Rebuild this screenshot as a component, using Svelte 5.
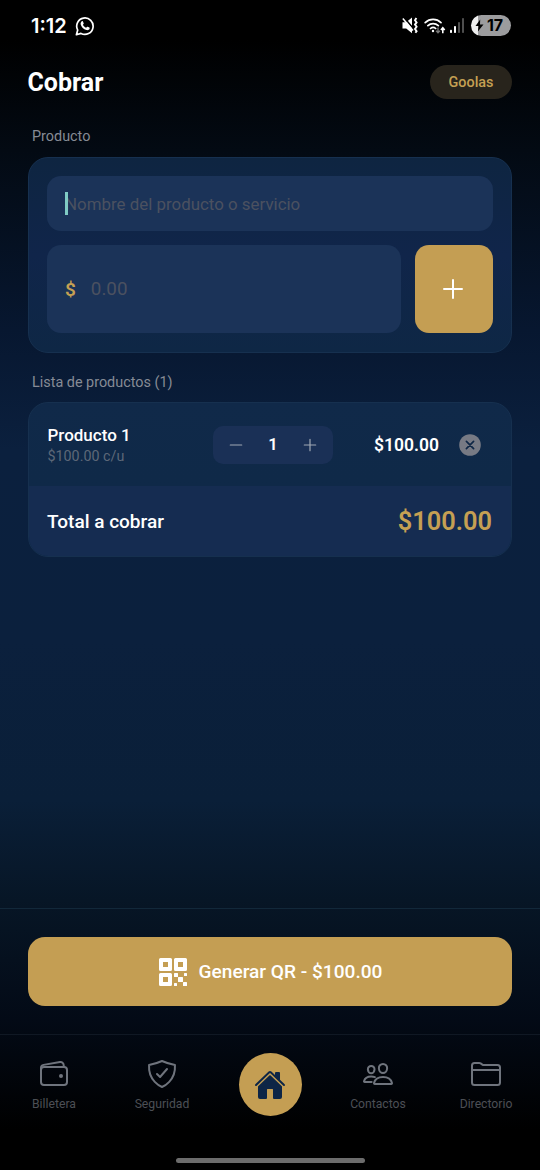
<script>
	/** @type {{ id: number, name: string, price: number, quantity: number }[]} Products to charge for. */
	let products = $state([{ id: 1, name: "Producto 1", price: 100, quantity: 1 }]);

	/** @type {number} Sum of every product line. */
	const total = $derived(products.reduce((sum, item) => sum + item.price * item.quantity, 0));

	const money = (value) => `$${value.toFixed(2)}`;

	const changeQuantity = (item, amount) => {
		item.quantity = Math.max(1, item.quantity + amount);
	};

	const removeProduct = (id) => {
		products = products.filter((item) => item.id !== id);
	};
</script>

<div class="screen">
	<div class="status">
		<div class="status-left">
			<span class="clock">1:12</span>
			<svg width="20" height="20" viewBox="0 0 20 20" fill="none">
				<path d="M1.4 18.7l1.3-4.6A8.2 8.2 0 1 1 6 17.4z" stroke="#fff" stroke-width="1.7" stroke-linejoin="round"/>
				<path d="M6.7 5.3c.4-.4 1-.4 1.2.1l.8 1.8c.1.3 0 .5-.2.8l-.6.8c.7 1.4 1.8 2.4 3.2 3l.8-.9c.2-.3.5-.3.8-.2l1.7.9c.4.2.4.6.2 1.1-.5 1.3-1.9 1.7-3.2 1.3-2.9-.9-5-3-5.7-5.6-.3-1.2.2-2.3 1-3.1z" fill="#fff"/>
			</svg>
		</div>
		<div class="status-right">
			<svg class="mute" width="17" height="17" viewBox="0 0 17 17">
				<path d="M.5 5.2h3.700L10 .6v15.600L4.200 11.600H.5z" fill="#fff"/>
				<path d="M2.200 .6L11 11.200" stroke="#000" stroke-width="1.600"/>
				<path d="M.8 1.400L11 13.600" stroke="#fff" stroke-width="1.500"/>
				<path d="M14.400 1l-1.400 2.200 1.600 2.200-1.600 2.200 1.600 2.200-1.600 2.200 1.600 2.200-1.200 1.600" fill="none" stroke="#fff" stroke-width="1.900"/>
			</svg>
			<svg class="wifi" width="22" height="18" viewBox="0 0 22 18" fill="none">
				<path d="M1.200 5.600a11.500 11.500 0 0 1 15.800 0M3.900 8.700a7.600 7.600 0 0 1 10.400 0M6.500 11.500a3.800 3.800 0 0 1 5.200 0" stroke="#fff" stroke-width="1.700" stroke-linecap="round"/>
				<circle cx="9" cy="14" r="1.200" fill="#fff"/>
				<path d="M14 10.500v5M12.100 13.700l1.900 2 1.900-2" stroke="#777" stroke-width="1.400"/>
				<path d="M18.800 16.200v-5M16.900 12.900l1.900-2.200 1.900 2.200" stroke="#fff" stroke-width="1.600"/>
			</svg>
			<svg class="signal" width="15" height="16" viewBox="0 0 15 16">
				<rect x="0" y="11.800" width="2" height="3.200" rx=".8" fill="#fff"/>
				<rect x="4" y="8" width="2" height="7" rx=".8" fill="#fff"/>
				<rect x="8" y="4" width="2" height="11" rx=".8" fill="#4e4e4e"/>
				<rect x="12" y="0" width="2" height="15" rx=".8" fill="#4e4e4e"/>
			</svg>
			<div class="battery">
				<svg width="9" height="13" viewBox="0 0 9 13"><path d="M5.200.5L.5 7h3l-.6 5.500L8.500 5.500H5z" fill="#000"/></svg>
				<span>17</span>
			</div>
		</div>
	</div>

	<header class="header">
		<h1>Cobrar</h1>
		<span class="pill">Goolas</span>
	</header>

	<main class="content">
		<h2>Producto</h2>
		<section class="card form">
			<div class="field name">
				<span class="cursor"></span>
				<span class="placeholder">Nombre del producto o servicio</span>
			</div>
			<div class="form-row">
				<div class="field price">
					<span class="currency">$</span>
					<span class="placeholder">0.00</span>
				</div>
				<button class="add" aria-label="Agregar producto">
					<svg width="20" height="20" viewBox="0 0 20 20"><path d="M10 1v18M1 10h18" stroke="#fff" stroke-width="2" stroke-linecap="round"/></svg>
				</button>
			</div>
		</section>

		<h2 class="list-title">Lista de productos ({products.length})</h2>
		<section class="card list">
			{#each products as item (item.id)}
				<div class="product">
					<div class="details">
						<strong>{item.name}</strong>
						<span>{money(item.price)} c/u</span>
					</div>
					<div class="stepper">
						<button aria-label="Menos" onclick={() => changeQuantity(item, -1)}>
							<svg width="14" height="14" viewBox="0 0 14 14"><path d="M1.300 7h11.400" stroke="#a0a8b4" stroke-width="1.200" stroke-linecap="round"/></svg>
						</button>
						<span>{item.quantity}</span>
						<button aria-label="Más" onclick={() => changeQuantity(item, 1)}>
							<svg width="14" height="14" viewBox="0 0 14 14"><path d="M1.300 7h11.400M7 1.300v11.400" stroke="#a0a8b4" stroke-width="1.200" stroke-linecap="round"/></svg>
						</button>
					</div>
					<span class="subtotal">{money(item.price * item.quantity)}</span>
					<button class="remove" aria-label="Quitar" onclick={() => removeProduct(item.id)}>
						<svg width="22" height="22" viewBox="0 0 22 22">
							<circle cx="11" cy="11" r="10.800" fill="#777a84"/>
							<path d="M7.400 7.400l7.200 7.200M14.600 7.400l-7.200 7.200" stroke="#0f2746" stroke-width="1.700" stroke-linecap="round"/>
						</svg>
					</button>
				</div>
			{/each}
			<div class="total">
				<span>Total a cobrar</span>
				<strong>{money(total)}</strong>
			</div>
		</section>
	</main>

	<div class="action">
		<button class="generate">
			<svg width="32" height="32" viewBox="0 0 512 512" fill="#fff">
				<path fill-rule="evenodd" d="M56 32h160a24 24 0 0 1 24 24v160a24 24 0 0 1-24 24H56a24 24 0 0 1-24-24V56a24 24 0 0 1 24-24zM96 96v80h80V96zM296 32h160a24 24 0 0 1 24 24v160a24 24 0 0 1-24 24H296a24 24 0 0 1-24-24V56a24 24 0 0 1 24-24zM336 96v80h80V96zM56 272h160a24 24 0 0 1 24 24v160a24 24 0 0 1-24 24H56a24 24 0 0 1-24-24V296a24 24 0 0 1 24-24zM96 336v80h80v-80z"/>
				<rect x="336" y="336" width="80" height="80" rx="8"/>
				<rect x="272" y="272" width="64" height="64" rx="8"/>
				<rect x="416" y="416" width="64" height="64" rx="8"/>
				<rect x="432" y="272" width="48" height="48" rx="8"/>
				<rect x="272" y="432" width="48" height="48" rx="8"/>
			</svg>
			<span>Generar QR - {money(total)}</span>
		</button>
	</div>

	<nav class="tabs">
		<a href="#billetera">
			<svg viewBox="0 0 512 512">
				<rect x="48" y="144" width="416" height="288" rx="48"/>
				<path d="M411.360 144v-30A50 50 0 0 0 352 64.900L88.640 109.850A50 50 0 0 0 48 159v49"/>
				<circle cx="368" cy="288" r="32" fill="currentColor" stroke="none"/>
			</svg>
			<span>Billetera</span>
		</a>
		<a href="#seguridad">
			<svg viewBox="0 0 512 512">
				<path d="M336 176L225.200 304 176 255.800"/>
				<path d="M463.100 112.370C373.680 96.330 336.710 84.450 256 48c-80.710 36.450-117.680 48.330-207.100 64.370C32.700 369.130 240.580 457.790 256 464c15.420-6.210 223.300-94.870 207.100-351.630z"/>
			</svg>
			<span>Seguridad</span>
		</a>
		<a href="#inicio" class="home" aria-label="Inicio">
			<span class="home-circle">
				<svg viewBox="0 0 512 512">
					<path d="M261.560 101.280a8 8 0 0 0-11.060 0L66.400 277.150a8 8 0 0 0-2.470 5.790L63.900 448a32 32 0 0 0 32 32H192a16 16 0 0 0 16-16V328a8 8 0 0 1 8-8h80a8 8 0 0 1 8 8v136a16 16 0 0 0 16 16h96.060a32 32 0 0 0 32-32V282.940a8 8 0 0 0-2.470-5.790z"/>
					<path d="M490.910 244.150l-74.800-71.560V64a16 16 0 0 0-16-16h-48a16 16 0 0 0-16 16v32l-57.920-55.380C272.770 35.140 264.710 32 256 32c-8.680 0-16.720 3.140-22.140 8.630l-212.700 203.500c-6.220 6-7 15.870-1.340 22.370A16 16 0 0 0 43 267.560L250.500 69.280a8 8 0 0 1 11.060 0l207.520 198.280a16 16 0 0 0 22.590-.44c6.140-6.360 5.630-16.860-.76-22.970z"/>
				</svg>
			</span>
		</a>
		<a href="#contactos">
			<svg viewBox="0 0 512 512">
				<path d="M402 168c-2.930 40.670-33.100 72-66 72s-63.120-31.320-66-72c-3-42.310 26.370-72 66-72s69 30.460 66 72z"/>
				<path d="M336 304c-65.170 0-127.840 32.370-143.540 95.410-2.080 8.340 3.150 16.590 11.720 16.590h263.650c8.570 0 13.770-8.250 11.720-16.590C463.850 335.360 401.180 304 336 304z"/>
				<path d="M200 185.940c-2.340 32.480-26.720 58.060-53 58.060s-50.700-25.570-53-58.060C91.610 152.150 115.340 128 147 128s55.390 24.770 53 57.940z"/>
				<path d="M206 306c-18.050-8.270-37.930-11.450-59-11.450-52 0-102.100 25.850-114.650 76.200-1.650 6.660 2.530 13.250 9.370 13.250H154"/>
			</svg>
			<span>Contactos</span>
		</a>
		<a href="#directorio">
			<svg viewBox="0 0 512 512">
				<path d="M440 432H72a40 40 0 0 1-40-40V120a40 40 0 0 1 40-40h75.890a40 40 0 0 1 22.190 6.720l27.840 18.560a40 40 0 0 0 22.190 6.720H440a40 40 0 0 1 40 40v240a40 40 0 0 1-40 40zM32 192h448"/>
			</svg>
			<span>Directorio</span>
		</a>
	</nav>
	<div class="gesture"><span></span></div>
</div>

<style>
	:global(body) {
		margin: 0;
		background: #000;
	}

	.screen {
		display: flex;
		flex-direction: column;
		box-sizing: border-box;
		width: 540px;
		height: 1170px;
		overflow: hidden;
		font-family: Roboto, "Liberation Sans", sans-serif;
		color: #fff;
		background: linear-gradient(180deg, #000 0, #000 40px, #030a13 150px, #071730 330px, #0b203e 450px, #0b203d 640px, #0a1f38 800px, #071626 900px, #030a16 1020px, #000 1130px);
	}

	button {
		display: flex;
		align-items: center;
		justify-content: center;
		padding: 0;
		border: 0;
		font: inherit;
		color: inherit;
		background: none;
	}

	.status {
		display: flex;
		justify-content: space-between;
		align-items: center;
		height: 51px;
		padding: 0 29px 0 31px;
	}

	.status-left,
	.status-right {
		display: flex;
		align-items: center;
	}

	.status-left {
		gap: 8px;
	}

	.clock {
		font-family: Inter, Roboto, sans-serif;
		font-size: 20px;
		font-weight: 600;
		letter-spacing: 0;
	}

	.mute {
		margin-right: 5px;
	}

	.wifi {
		margin-right: 4px;
	}

	.signal {
		margin-right: 6px;
	}

	.battery {
		display: flex;
		align-items: center;
		gap: 3px;
		box-sizing: border-box;
		width: 40px;
		height: 21px;
		padding-left: 4px;
		border-radius: 11px;
		font-family: Inter, Roboto, sans-serif;
		font-size: 16px;
		font-weight: 700;
		letter-spacing: -0.2px;
		line-height: 20px;
		color: #000;
		background: linear-gradient(90deg, #eee 7px, #9c9c9e 7px);
	}

	.battery span {
		padding-bottom: 1px;
	}

	.header {
		display: flex;
		align-items: center;
		justify-content: space-between;
		height: 61px;
		padding: 0 28px 0 27.5px;
	}

	h1 {
		margin: 0;
		padding-top: 1px;
		font-size: 25px;
		font-weight: 700;
	}

	.pill {
		box-sizing: border-box;
		width: 82px;
		height: 34px;
		border-radius: 17px;
		line-height: 35px;
		text-align: center;
		font-size: 14.4px;
		font-weight: 500;
		color: #c5a053;
		background: #28241c;
	}

	.content {
		flex: 1;
		padding: 15px 28px 0;
	}

	h2 {
		margin: 0 4px 10px;
		font-size: 14.4px;
		font-weight: 400;
		line-height: 20px;
		color: #868b95;
	}

	.list-title {
		margin-top: 20px;
		margin-bottom: 9px;
	}

	.card {
		box-sizing: border-box;
		border: 1px solid #16304f;
		border-radius: 20px;
		overflow: hidden;
	}

	.form {
		display: flex;
		flex-direction: column;
		gap: 14px;
		height: 196px;
		padding: 18px;
		background: linear-gradient(180deg, #0e2541, #10254a 50%, #0e2745);
	}

	.form-row {
		display: flex;
		gap: 14px;
		height: 88px;
	}

	.field {
		display: flex;
		align-items: center;
		box-sizing: border-box;
		padding: 0 18px;
		border-radius: 14px;
		background: #1b3358;
	}

	.name {
		position: relative;
		height: 55px;
		font-size: 16.9px;
	}

	.placeholder {
		color: #4b5160;
	}

	.cursor {
		position: absolute;
		top: 16px;
		left: 18px;
		width: 3px;
		height: 23px;
		background: #80cbc4;
	}

	.price {
		flex: 1;
		gap: 15px;
		font-size: 18.8px;
	}

	.currency {
		font-size: 19px;
		font-weight: 600;
		color: #c5a053;
	}

	.add {
		width: 78px;
		border-radius: 14px;
		background: #c49e53;
	}

	.add svg {
		margin-right: 2px;
	}

	.list {
		background: linear-gradient(180deg, #102949, #0e2947);
	}

	.product {
		display: flex;
		align-items: center;
		height: 83px;
		padding: 0 30px 0 18.5px;
	}

	.details {
		display: flex;
		flex-direction: column;
		gap: 2px;
		width: 166px;
		padding-top: 2px;
		line-height: 19px;
	}

	.details strong {
		font-size: 17px;
		font-weight: 500;
	}

	.details span {
		font-size: 14.3px;
		color: #5d6878;
	}

	.stepper {
		display: flex;
		align-items: center;
		justify-content: space-between;
		box-sizing: border-box;
		width: 120px;
		height: 38px;
		margin-left: -0.5px;
		padding: 0 16px;
		border-radius: 10px;
		background: #1a3056;
	}

	.stepper span {
		font-size: 16.5px;
		font-weight: 600;
	}

	.subtotal {
		flex: 1;
		text-align: right;
		font-size: 17.5px;
		font-weight: 600;
	}

	.remove {
		margin-left: 20px;
	}

	.total {
		display: flex;
		align-items: center;
		justify-content: space-between;
		height: 70px;
		padding: 0 19px 0 18px;
		font-size: 19px;
		font-weight: 500;
		background: #152c51;
	}

	.total strong {
		font-size: 25.4px;
		font-weight: 600;
		color: #c5a053;
	}

	.action {
		box-sizing: border-box;
		height: 126px;
		padding: 28px 28px 0;
		border-top: 1px solid #12283a;
	}

	.generate {
		gap: 10px;
		width: 100%;
		height: 69px;
		padding-right: 1px;
		border-radius: 17px;
		font-size: 19.1px;
		font-weight: 500;
		background: #c49e53;
	}

	.tabs {
		display: flex;
		box-sizing: border-box;
		height: 124px;
		border-top: 1px solid #101824;
	}

	.tabs a {
		display: flex;
		flex: 1;
		flex-direction: column;
		align-items: center;
		box-sizing: border-box;
		padding-top: 23px;
		font-size: 12.2px;
		line-height: 16px;
		text-decoration: none;
		color: #4c4f55;
	}

	.tabs a > svg {
		width: 32px;
		height: 32px;
		margin-bottom: 6px;
		fill: none;
		stroke: currentColor;
		stroke-width: 32;
		stroke-linecap: round;
		stroke-linejoin: round;
		color: #6f747d;
	}

	.tabs .home {
		padding-top: 18px;
	}

	.home-circle {
		display: flex;
		align-items: center;
		justify-content: center;
		width: 63px;
		height: 63px;
		border-radius: 50%;
		background: #c49e53;
	}

	.home-circle svg {
		width: 32px;
		height: 32px;
		fill: #0d2546;
	}

	.gesture {
		display: flex;
		justify-content: center;
		height: 12px;
	}

	.gesture span {
		width: 189px;
		height: 5px;
		border-radius: 3px;
		background: #6c6c6c;
	}
</style>
